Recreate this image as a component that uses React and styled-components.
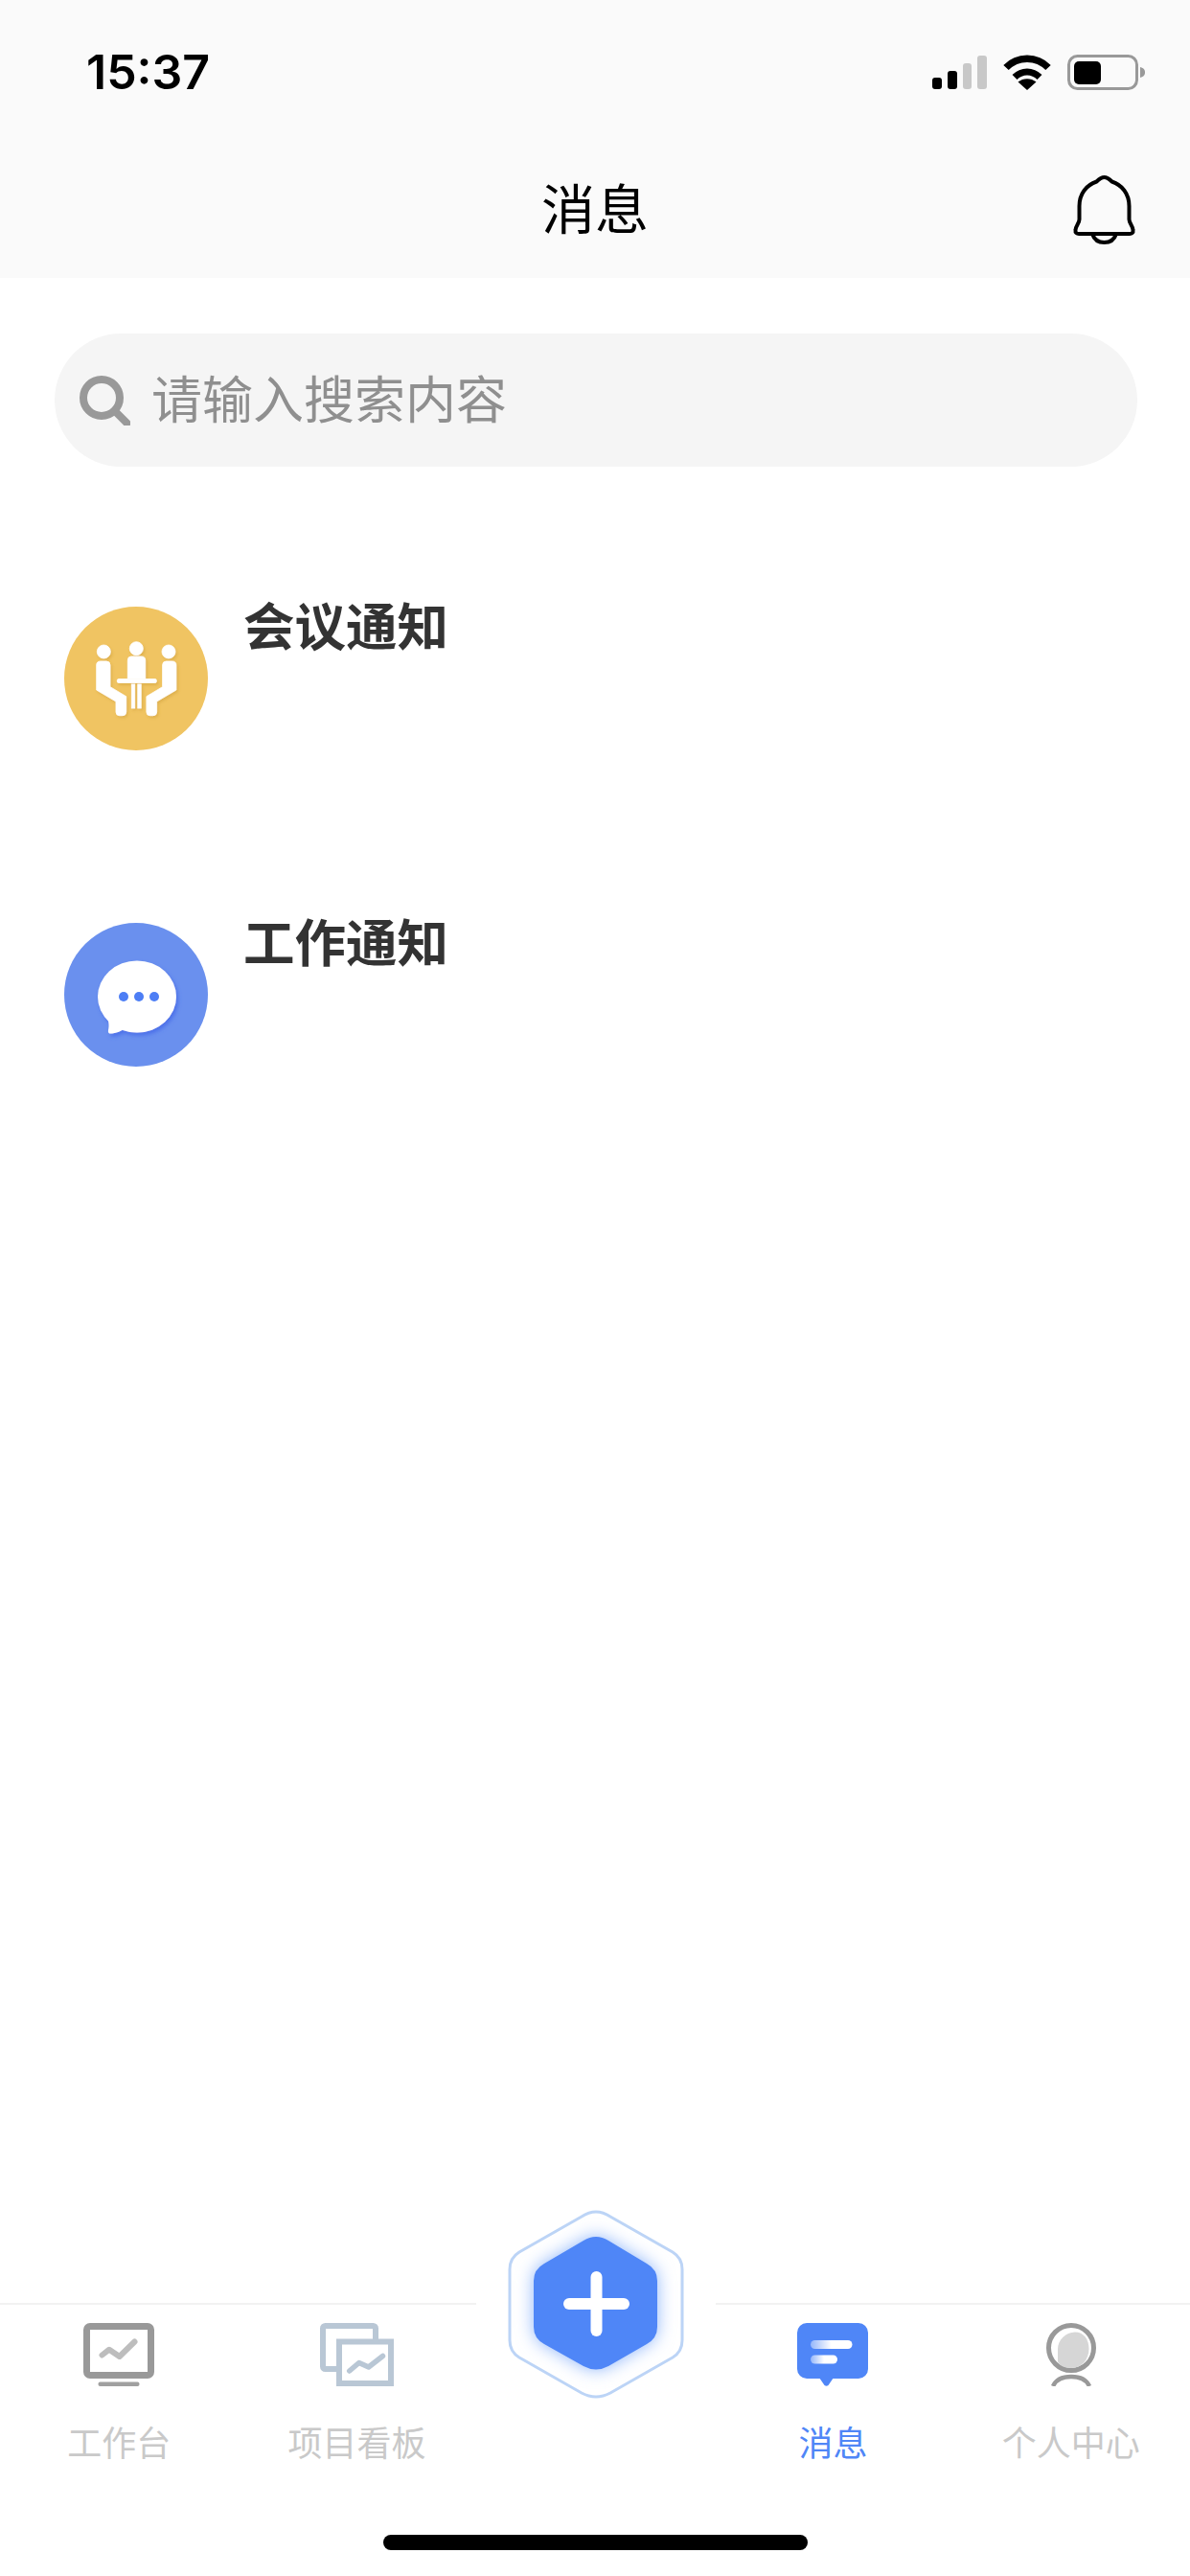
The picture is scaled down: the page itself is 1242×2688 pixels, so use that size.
import React from "react";
import styled, { createGlobalStyle } from "styled-components";

const Global = createGlobalStyle`
  html, body { margin: 0; padding: 0; background: #fff; }
  * { box-sizing: border-box; }
`;

const CJK = `"Noto Sans CJK SC", "Noto Sans", sans-serif`;

const Page = styled.div`
  width: 1242px;
  height: 2688px;
  display: flex;
  flex-direction: column;
  background: #fff;
  font-family: ${CJK};
  overflow: hidden;
`;

const Header = styled.header`
  height: 290px;
  flex: none;
  background: #fafafa;
  display: flex;
  flex-direction: column;
`;

const StatusBar = styled.div`
  display: flex;
  align-items: center;
  justify-content: space-between;
  padding: 57px 47px 0 90px;
  height: 94px;
`;

const Clock = styled.span`
  font-family: Inter, "Liberation Sans", sans-serif;
  font-size: 50px;
  font-weight: 600;
  line-height: 37px;
  color: #000;
`;

const StatusIcons = styled.div`
  display: flex;
  align-items: center;
  gap: 17px;
`;

const TitleRow = styled.div`
  display: grid;
  grid-template-columns: 1fr auto 1fr;
  align-items: center;
  padding: 89px 57px 0;
`;

const Title = styled.h1`
  grid-column: 2;
  margin: -8px 0 0;
  font-size: 56px;
  font-weight: 400;
  line-height: 72px;
  color: #000;
`;

const BellButton = styled.div`
  grid-column: 3;
  grid-row: 1;
  justify-self: end;
  display: flex;
  height: 72px;
`;

const SearchBar = styled.div`
  margin: 58px 55px 0 57px;
  height: 139px;
  border-radius: 70px;
  background: #f5f5f5;
  display: flex;
  align-items: center;
  gap: 22px;
  padding-left: 26px;
`;

const Placeholder = styled.span`
  font-size: 53px;
  line-height: 70px;
  margin-top: -8px;
  color: #8f8f8f;
`;

const List = styled.div`
  display: flex;
  flex-direction: column;
  padding: 146px 0 0 67px;
  gap: 180px;
`;

const Row = styled.div`
  display: flex;
  align-items: flex-start;
  gap: 37px;
  height: 150px;
`;

const AvatarBox = styled.div`
  display: flex;
  flex: none;
  filter: blur(0.5px);
`;

const RowTitle = styled.span`
  font-size: 53.5px;
  font-weight: 700;
  line-height: 60px;
  margin-top: -12px;
  color: #333;
`;

const Spacer = styled.div`
  flex: 1;
`;

const TabBar = styled.nav`
  position: relative;
  flex: none;
  display: grid;
  grid-template-columns: repeat(5, 1fr);
  border-top: 2px solid #f2f2f2;
  padding-top: 19px;
`;

const Tab = styled.div`
  display: flex;
  flex-direction: column;
  align-items: center;
  gap: 35px;
`;

const TabIcon = styled.div`
  height: 66px;
  display: flex;
  filter: blur(0.6px);
`;

const TabLabel = styled.span`
  font-size: 36px;
  line-height: 44px;
  color: ${(p) => (p.$active ? "#4f86f7" : "#c9c9c9")};
`;

const FabSlot = styled.div`
  position: relative;
`;

const Fab = styled.div`
  position: absolute;
  left: 50%;
  top: -120px;
  width: 250px;
  height: 204px;
  margin-left: -124px;
  background: #fff;
  display: flex;
`;

const HomeBar = styled.div`
  flex: none;
  width: 443px;
  height: 16px;
  border-radius: 8px;
  background: #000;
  margin: 76px 0 27px 400px;
`;

const Signal = () => (
  <svg width="57" height="35" viewBox="0 0 57 35">
    <rect x="0" y="23" width="10" height="12" rx="3" fill="#000" />
    <rect x="16" y="16" width="10" height="19" rx="3" fill="#000" />
    <rect x="32" y="8" width="9" height="27" rx="3" fill="#c8c8c8" />
    <rect x="47" y="0" width="10" height="35" rx="3" fill="#c8c8c8" />
  </svg>
);

const Wifi = () => (
  <svg width="50" height="37" viewBox="0 0 50 37" fill="none">
    <path d="M3 13.5 C15 1 35 1 47 13.5" stroke="#000" strokeWidth="7.5" />
    <path d="M12 23.5 C19.5 16 30.5 16 38 23.5" stroke="#000" strokeWidth="7" />
    <path d="M25 37 L15.5 28.5 C21 24 29 24 34.5 28.5 Z" fill="#000" />
  </svg>
);

const Battery = () => (
  <svg width="81" height="37" viewBox="0 0 81 37">
    <rect x="1.5" y="1.5" width="71" height="34" rx="9" fill="none" stroke="#999" strokeWidth="3" />
    <rect x="7" y="7" width="28" height="24" rx="5" fill="#000" />
    <path d="M76 13 C80 14 81 16 81 18.5 C81 21 80 23 76 24 Z" fill="#999" />
  </svg>
);

const Bell = () => (
  <svg width="65" height="72" viewBox="0 0 65 72" fill="none" stroke="#000" strokeWidth="4" strokeLinejoin="round">
    <path d="M32.5 2 C36 2 38 4 40.5 6.5 C51 10 58.5 19 58.5 32 V46 C58.5 50 62.5 53 62.5 57 C63 60 61 61 59 61 H6 C4 61 2 60 2.5 57 C2.5 53 6.5 50 6.5 46 V32 C6.5 19 14 10 24.5 6.5 C27 4 29 2 32.5 2 Z" />
    <path d="M20 61 C22 67 27 70 32.5 70 C38 70 43 67 45 61" />
  </svg>
);

const SearchIcon = () => (
  <svg width="53" height="52" viewBox="0 0 53 52" fill="none" stroke="#999" strokeWidth="8">
    <circle cx="23" cy="23" r="19" />
    <path d="M37 37 L49.5 49.5" strokeLinecap="round" />
  </svg>
);

const MeetingAvatar = () => (
  <svg width="150" height="150" viewBox="0 0 150 150">
    <defs>
      <filter id="mtgShadow" x="-20%" y="-20%" width="140%" height="140%">
        <feDropShadow dx="1.5" dy="2" stdDeviation="1.5" floodColor="#c99a35" floodOpacity="0.45" />
      </filter>
    </defs>
    <circle cx="75" cy="75" r="75" fill="#f0c462" />
    <g fill="#fff" stroke="#fff" strokeWidth="0.8" filter="url(#mtgShadow)">
      <circle cx="41.3" cy="47" r="7" />
      <circle cx="75.3" cy="43.7" r="7" />
      <circle cx="109" cy="47" r="7" />
      <path d="M70 52 H80.5 Q84.7 52 84.7 56 V75 H66.3 V56 Q66.3 52 70 52 Z" />
      <rect x="55.3" y="75.5" width="41" height="4" rx="1.5" />
      <rect x="70.3" y="81" width="3.4" height="25" />
      <rect x="76.8" y="81" width="3.4" height="25" />
      <path d="M38 57 H44 Q48 57 48 61 V83.7 L64.7 93.7 V110 Q64.7 113.7 61 113.7 H57.7 Q54 113.7 54 110 V99 L33.7 87 V61 Q33.7 57 38 57 Z" />
      <path d="M112.6 57 H106.6 Q102.6 57 102.6 61 V83.7 L85.9 93.7 V110 Q85.9 113.7 89.6 113.7 H92.9 Q96.6 113.7 96.6 110 V99 L116.9 87 V61 Q116.9 57 112.6 57 Z" />
    </g>
  </svg>
);

const WorkAvatar = () => (
  <svg width="150" height="150" viewBox="0 0 150 150">
    <defs>
      <filter id="chatShadow" x="-20%" y="-20%" width="140%" height="140%">
        <feDropShadow dx="2" dy="3" stdDeviation="2" floodColor="#3f66e8" floodOpacity="0.75" />
      </filter>
    </defs>
    <circle cx="75" cy="75" r="75" fill="#6a90ee" />
    <g fill="#fff" filter="url(#chatShadow)">
      <ellipse cx="76" cy="77" rx="41" ry="37.5" />
      <path d="M44 96 C47 103 47 108 46 112 C45.5 115 47 116 50 115.5 C55 115 59 113 64 110 Z" />
    </g>
    <g fill="#4d7ef5">
      <circle cx="62" cy="77" r="5" />
      <circle cx="78" cy="77" r="5" />
      <circle cx="94" cy="77" r="5" />
    </g>
  </svg>
);

const MonitorIcon = () => (
  <svg width="74" height="66" viewBox="0 0 74 66" fill="none">
    <rect x="3.5" y="3.5" width="67" height="51" rx="3.5" stroke="#999" strokeWidth="7" fill="#fff" />
    <rect x="15.5" y="61.5" width="43" height="4.5" rx="2" fill="#a0a0a0" />
    <path d="M19.5 33.5 L27 27.7 L37.7 35 L53.5 19.5" stroke="#bdbdbd" strokeWidth="6" strokeLinecap="round" strokeLinejoin="round" />
  </svg>
);

const BoardIcon = () => (
  <svg width="77" height="66" viewBox="0 0 77 66" fill="none">
    <rect x="3" y="3" width="55" height="45" rx="2.5" stroke="#b9c7d5" strokeWidth="6" fill="#fff" />
    <rect x="20" y="19.5" width="54" height="43.5" stroke="#b9c7d5" strokeWidth="6" fill="#fff" />
    <path d="M30.7 50 L40.7 41.5 L50.7 46 L65.5 34.5" stroke="#b9c7d5" strokeWidth="5.5" strokeLinecap="round" strokeLinejoin="round" />
  </svg>
);

const MessageIcon = () => (
  <svg width="74" height="66" viewBox="0 0 74 66">
    <defs>
      <linearGradient id="msgBar" x1="0" x2="1" y1="0" y2="0">
        <stop offset="0" stopColor="#fff" stopOpacity="0.4" />
        <stop offset="0.5" stopColor="#fff" stopOpacity="1" />
      </linearGradient>
    </defs>
    <rect x="0" y="0" width="74" height="58" rx="10" fill="#4f86f7" />
    <path d="M23 57 H38 L32.5 65 Q30.5 66.5 28.5 65 Z" fill="#4f86f7" />
    <rect x="14" y="18" width="43.5" height="9" rx="4.5" fill="url(#msgBar)" />
    <rect x="14" y="33.5" width="28" height="9" rx="4.5" fill="url(#msgBar)" />
  </svg>
);

const PersonIcon = () => (
  <svg width="52" height="66" viewBox="0 0 52 66" fill="none">
    <circle cx="26" cy="26" r="23.5" stroke="#999" strokeWidth="5" />
    <path d="M30 9.5 C39 9.5 44.5 17 44.5 27 C44.5 38 37 47 26 47 C18 47 13 44 12 40 V27 C12 18 20 9.5 30 9.5 Z" fill="#d6d6d6" />
    <path d="M7 66 C10 59 17 56 26 56 C35 56 42 59 45 66" stroke="#999" strokeWidth="4.5" />
  </svg>
);

const outerHex = "M110 9 Q125 -1 140 9 L205 46 Q215 52 215 64 V138 Q215 150 205 156 L140 193 Q125 201 110 193 L45 156 Q35 150 35 138 V64 Q35 52 45 46 Z";
const innerHex = "M112 34 Q125 26 138 34 L178 58 Q189 64 189 76 V124 Q189 136 178 142 L138 165 Q125 172 112 165 L71 142 Q60 136 60 124 V76 Q60 64 71 58 Z";

const PlusHex = () => (
  <svg width="250" height="204" viewBox="0 0 250 204" fill="none">
    <defs>
      <filter id="hexGlow" x="-30%" y="-30%" width="160%" height="160%">
        <feGaussianBlur stdDeviation="9" />
      </filter>
      <clipPath id="hexClip">
        <path d={outerHex} />
      </clipPath>
    </defs>
    <g clipPath="url(#hexClip)">
      <path d={innerHex} fill="#8fb6fa" filter="url(#hexGlow)" />
    </g>
    <path d={outerHex} stroke="#bcd4f6" strokeWidth="3" />
    <path d={innerHex} fill="#4f86f7" />
    <rect x="91" y="94" width="69" height="12" rx="6" fill="#fff" />
    <rect x="119.5" y="66" width="12" height="68" rx="6" fill="#fff" />
  </svg>
);

const notices = [
  { title: "会议通知", Avatar: MeetingAvatar },
  { title: "工作通知", Avatar: WorkAvatar },
];

export default function App() {
  return (
    <Page>
      <Global />
      <Header>
        <StatusBar>
          <Clock>15:37</Clock>
          <StatusIcons>
            <Signal />
            <Wifi />
            <Battery />
          </StatusIcons>
        </StatusBar>
        <TitleRow>
          <Title>消息</Title>
          <BellButton>
            <Bell />
          </BellButton>
        </TitleRow>
      </Header>
      <SearchBar>
        <SearchIcon />
        <Placeholder>请输入搜索内容</Placeholder>
      </SearchBar>
      <List>
        {notices.map(({ title, Avatar }) => (
          <Row key={title}>
            <AvatarBox><Avatar /></AvatarBox>
            <RowTitle>{title}</RowTitle>
          </Row>
        ))}
      </List>
      <Spacer />
      <TabBar>
        <Tab>
          <TabIcon><MonitorIcon /></TabIcon>
          <TabLabel>工作台</TabLabel>
        </Tab>
        <Tab>
          <TabIcon><BoardIcon /></TabIcon>
          <TabLabel>项目看板</TabLabel>
        </Tab>
        <FabSlot>
          <Fab><PlusHex /></Fab>
        </FabSlot>
        <Tab>
          <TabIcon><MessageIcon /></TabIcon>
          <TabLabel $active>消息</TabLabel>
        </Tab>
        <Tab>
          <TabIcon><PersonIcon /></TabIcon>
          <TabLabel>个人中心</TabLabel>
        </Tab>
      </TabBar>
      <HomeBar />
    </Page>
  );
}
